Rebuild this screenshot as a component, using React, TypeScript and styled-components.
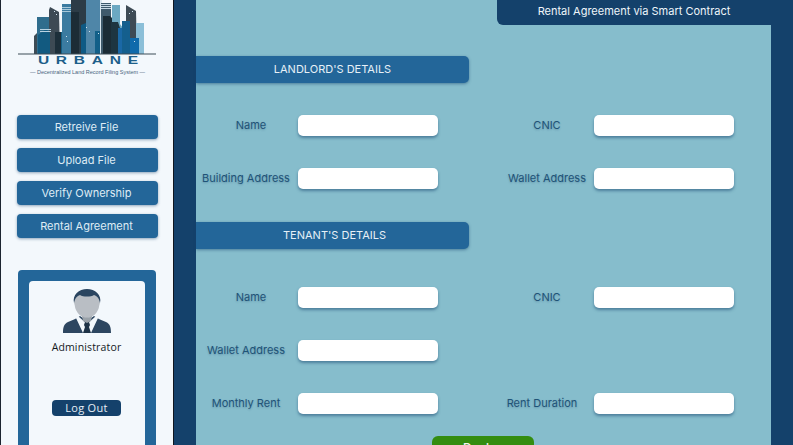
import React from "react";
import styled, { createGlobalStyle } from "styled-components";

const Global = createGlobalStyle`
  html, body { margin: 0; padding: 0; background: #14416b; }
  body { font-family: Inter, "Liberation Sans", sans-serif; overflow: hidden; }
  * { box-sizing: border-box; }
`;

const Page = styled.div`
  display: flex;
  width: 793px;
  height: 445px;
  overflow: hidden;
  background: #14416b;
`;

const Sidebar = styled.aside`
  flex: none;
  width: 174px;
  height: 445px;
  padding-left: 1px;
  background: #f3f8fc;
  border-left: 1px solid #1b2430;
  border-right: 1px solid #10161f;
  display: flex;
  flex-direction: column;
  overflow: hidden;
`;

const Brand = styled.div`
  flex: none;
  height: 115px;
  display: flex;
  flex-direction: column;
  align-items: center;
`;

const Wordmark = styled.div`
  margin-top: -1px;
  width: 172px;
  text-align: center;
  font-family: "Liberation Sans", Arial, sans-serif;
  font-size: 11.5px;
  line-height: 13px;
  font-weight: 700;
  letter-spacing: 5px;
  padding-left: 5px;
  color: #1d5f8a;
  transform: scaleX(1.35);
`;

const Tagline = styled.div`
  margin-top: 1px;
  font-family: "Liberation Sans", Arial, sans-serif;
  font-size: 5.5px;
  line-height: 8px;
  color: #48657c;
  white-space: nowrap;
`;

const Nav = styled.nav`
  flex: none;
  display: flex;
  flex-direction: column;
  gap: 9px;
  padding: 0 15px;
`;

const NavButton = styled.button`
  height: 24px;
  border: 0;
  border-radius: 4px;
  background: #236699;
  color: #dfecf5;
  font: 400 11px/24px Inter, sans-serif;
  text-align: center;
  padding: 0 2px 0 0;
  box-shadow: 0 1px 3px rgba(20, 65, 107, 0.45);
`;

const ProfileFrame = styled.section`
  margin: 32px 17px 0 16px;
  height: 200px;
  flex: none;
  padding: 11px 11px 0;
  background: #236699;
  border-radius: 4px;
`;

const ProfileCard = styled.div`
  height: 189px;
  background: #f3f8fc;
  border-radius: 4px;
  display: flex;
  flex-direction: column;
  align-items: center;
  padding-top: 8px;
`;

const Role = styled.div`
  margin-top: 6px;
  margin-right: 1px;
  font: 400 10.5px/16px "Open Sans", Inter, sans-serif;
  letter-spacing: 0.15px;
  color: #14181c;
`;

const LogOut = styled.button`
  margin: 45px 1px 0 0;
  width: 69px;
  height: 16px;
  border: 0;
  padding: 0;
  border-radius: 4px;
  background: #14416b;
  color: #e6eff6;
  font: 400 11px/16px "Open Sans", Inter, sans-serif;
  letter-spacing: 0.3px;
`;

const Main = styled.main`
  flex: 1;
  height: 445px;
  padding: 0 22px;
  overflow: hidden;
`;

const Panel = styled.div`
  height: 445px;
  background: #86bdcc;
  display: flex;
  flex-direction: column;
`;

const TitleTab = styled.h1`
  align-self: flex-end;
  flex: none;
  margin: 0 -22px 0 0;
  width: 296px;
  height: 25px;
  padding: 0 22px 4px 0;
  background: #14416b;
  border-radius: 0 0 0 6px;
  color: #eef5fa;
  font: 400 11px/23px Inter, sans-serif;
  text-align: center;
`;

const SectionBar = styled.h2<{ $top: number; $shift: number }>`
  margin: ${(p) => p.$top}px 0 0;
  flex: none;
  width: 273px;
  height: 27px;
  padding-left: ${(p) => p.$shift}px;
  background: #236699;
  border-radius: 0 5px 5px 0;
  box-shadow: 0 1px 3px rgba(20, 65, 107, 0.5);
  color: #e6f0f7;
  font: 400 11px/26px Inter, sans-serif;
  text-align: center;
`;

const FormRow = styled.div<{ $top: number }>`
  flex: none;
  display: grid;
  grid-template-columns: 296px 1fr;
  margin-top: ${(p) => p.$top}px;
  height: 21px;
`;

const Field = styled.label`
  display: flex;
  align-items: center;
`;

const FieldName = styled.span<{ $nudge?: boolean }>`
  flex: none;
  width: 100px;
  margin-right: 2px;
  padding-bottom: 2px;
  padding-left: ${(p) => (p.$nudge ? 10 : 0)}px;
  text-align: center;
  white-space: nowrap;
  font: 400 11px/14px Inter, sans-serif;
  color: #1f5377;
  text-shadow: 0 1px 2px rgba(20, 65, 107, 0.3);
`;

const FieldInput = styled.input`
  width: 140px;
  height: 21px;
  border: 0;
  padding: 0 6px;
  border-radius: 5px;
  background: #fff;
  outline: none;
  box-shadow: 0 2px 3px rgba(20, 65, 107, 0.5);
`;

const Submit = styled.button`
  align-self: flex-start;
  flex: none;
  margin: 22px 0 0 236px;
  width: 102px;
  height: 24px;
  border: 0;
  padding: 0;
  border-radius: 6px;
  background: #348d10;
  color: #f2f8ee;
  font: 500 12px/22px Inter, sans-serif;
`;

const Skyline = () => (
  <svg width="172" height="55" viewBox="0 0 172 55" aria-hidden="true">
    <polygon points="32,54 32,36 36,32 36,54" fill="#3c4c56" />
    <rect x="35" y="17" width="13" height="37" fill="#2f6d8d" />
    <polygon points="47,54 47,10 48,7 57,12 58,54" fill="#3d4a54" />
    <polygon points="36,54 36,35 44,29 48,33 48,54" fill="#125a80" />
    <rect x="38" y="29" width="11" height="1" fill="#b9d3e2" />
    <rect x="38" y="31" width="11" height="1" fill="#b9d3e2" />
    <rect x="53" y="32" width="7" height="22" fill="#1d2f3a" />
    <rect x="59" y="32" width="8" height="22" fill="#125f84" />
    <rect x="60" y="4" width="16" height="50" fill="#3b7ba0" />
    <rect x="60" y="7" width="15" height="1" fill="#a9c9da" />
    <rect x="60" y="9" width="15" height="1" fill="#a9c9da" />
    <rect x="60" y="11" width="15" height="1" fill="#a9c9da" />
    <rect x="69" y="0" width="16" height="54" fill="#2c3c47" />
    <rect x="69" y="12" width="8" height="42" fill="#1c2c36" />
    <polygon points="79,54 79,25 84,23 88,28 88,54" fill="#0f5a84" />
    <rect x="84" y="0" width="14" height="54" fill="#4f86a8" />
    <rect x="93" y="31" width="9" height="23" fill="#125f88" />
    <rect x="98" y="0" width="2" height="54" fill="#d9e6ee" />
    <rect x="99" y="3" width="10" height="51" fill="#3f5a6c" />
    <rect x="99" y="4" width="10" height="1" fill="#c7d9e4" />
    <rect x="99" y="6" width="10" height="1" fill="#c7d9e4" />
    <rect x="99" y="8" width="10" height="1" fill="#c7d9e4" />
    <polygon points="101,54 101,16 108,16 116,24 116,54" fill="#1b2c36" />
    <polygon points="110,54 110,5 118,5 118,24 121,28 121,54" fill="#6ba8c2" />
    <polygon points="109,22 116,22 118,28 118,54 109,54" fill="#1d3541" />
    <rect x="116" y="28" width="9" height="26" fill="#1a68a6" />
    <polygon points="124,54 124,5 134,11 135,54" fill="#3e4b55" />
    <rect x="134" y="23" width="8" height="31" fill="#8bbfd8" />
    <rect x="120" y="21" width="8" height="33" fill="#145f8e" />
    <rect x="128" y="38" width="9" height="16" fill="#0f6aab" />
    <g fill="#cfe2ee">
      <rect x="84" y="27" width="1" height="1" />
      <rect x="87" y="31" width="1" height="1" />
      <rect x="64" y="36" width="1" height="1" />
      <rect x="65" y="41" width="1" height="1" />
      <rect x="132" y="41" width="1" height="1" />
      <rect x="130" y="11" width="1" height="1" />
      <rect x="127" y="13" width="1" height="1" />
      <rect x="52" y="11" width="1" height="1" />
      <rect x="54" y="14" width="1" height="1" />
      <rect x="96" y="33" width="1" height="1" />
    </g>
    <rect x="16" y="53.5" width="138" height="1" fill="#3c4c56" />
  </svg>
);

const Avatar = () => (
  <svg width="48" height="44" viewBox="0 0 48 44" aria-hidden="true">
    <path d="M0 44c0-6 1-9 5-11 4-2 8-3 12-6l7 5 7-5c4 3 8 4 12 6 4 2 5 5 5 11z" fill="#2d4660" />
    <path d="M15 27l9 8 9-8 2 2-7 15h-8l-7-15z" fill="#f3f8fc" />
    <path d="M22 33h4l1 3-1 2 2 6h-8l2-6-1-2z" fill="#1e3347" />
    <path d="M11 12c0-7 6-11 13-11s13 4 13 11c0 3-1 4-1 6-1 5-6 11-12 11S13 23 12 18c0-2-1-3-1-6z" fill="#b9bec4" />
    <path d="M11 14C9 6 16 0 24 0s15 6 13 14c-1-5-3-7-6-8-3 2-11 2-14 0-3 1-5 3-6 8z" fill="#2a4560" />
    <path d="M19 27c3 2 7 2 10 0l-1 5-4 2-4-2z" fill="#9aa2a9" />
  </svg>
);

const navItems = ["Retreive File", "Upload File", "Verify Ownership", "Rental Agreement"];

export default function App() {
  return (
    <Page>
      <Global />
      <Sidebar>
        <Brand>
          <Skyline />
          <Wordmark>URBANE</Wordmark>
          <Tagline>— Decentralized Land Record Filing System —</Tagline>
        </Brand>
        <Nav>
          {navItems.map((item) => (
            <NavButton key={item}>{item}</NavButton>
          ))}
        </Nav>
        <ProfileFrame>
          <ProfileCard>
            <Avatar />
            <Role>Administrator</Role>
            <LogOut>Log Out</LogOut>
          </ProfileCard>
        </ProfileFrame>
      </Sidebar>
      <Main>
        <Panel>
          <TitleTab>Rental Agreement via Smart Contract</TitleTab>
          <SectionBar $top={31} $shift={0}>LANDLORD'S DETAILS</SectionBar>
          <FormRow $top={32}>
            <Field><FieldName $nudge>Name</FieldName><FieldInput /></Field>
            <Field><FieldName $nudge>CNIC</FieldName><FieldInput /></Field>
          </FormRow>
          <FormRow $top={32}>
            <Field><FieldName>Building Address</FieldName><FieldInput /></Field>
            <Field><FieldName $nudge>Wallet Address</FieldName><FieldInput /></Field>
          </FormRow>
          <SectionBar $top={33} $shift={4}>TENANT'S DETAILS</SectionBar>
          <FormRow $top={38}>
            <Field><FieldName $nudge>Name</FieldName><FieldInput /></Field>
            <Field><FieldName $nudge>CNIC</FieldName><FieldInput /></Field>
          </FormRow>
          <FormRow $top={32}>
            <Field><FieldName>Wallet Address</FieldName><FieldInput /></Field>
          </FormRow>
          <FormRow $top={32}>
            <Field><FieldName>Monthly Rent</FieldName><FieldInput /></Field>
            <Field><FieldName>Rent Duration</FieldName><FieldInput /></Field>
          </FormRow>
          <Submit>Deploy</Submit>
        </Panel>
      </Main>
    </Page>
  );
}
